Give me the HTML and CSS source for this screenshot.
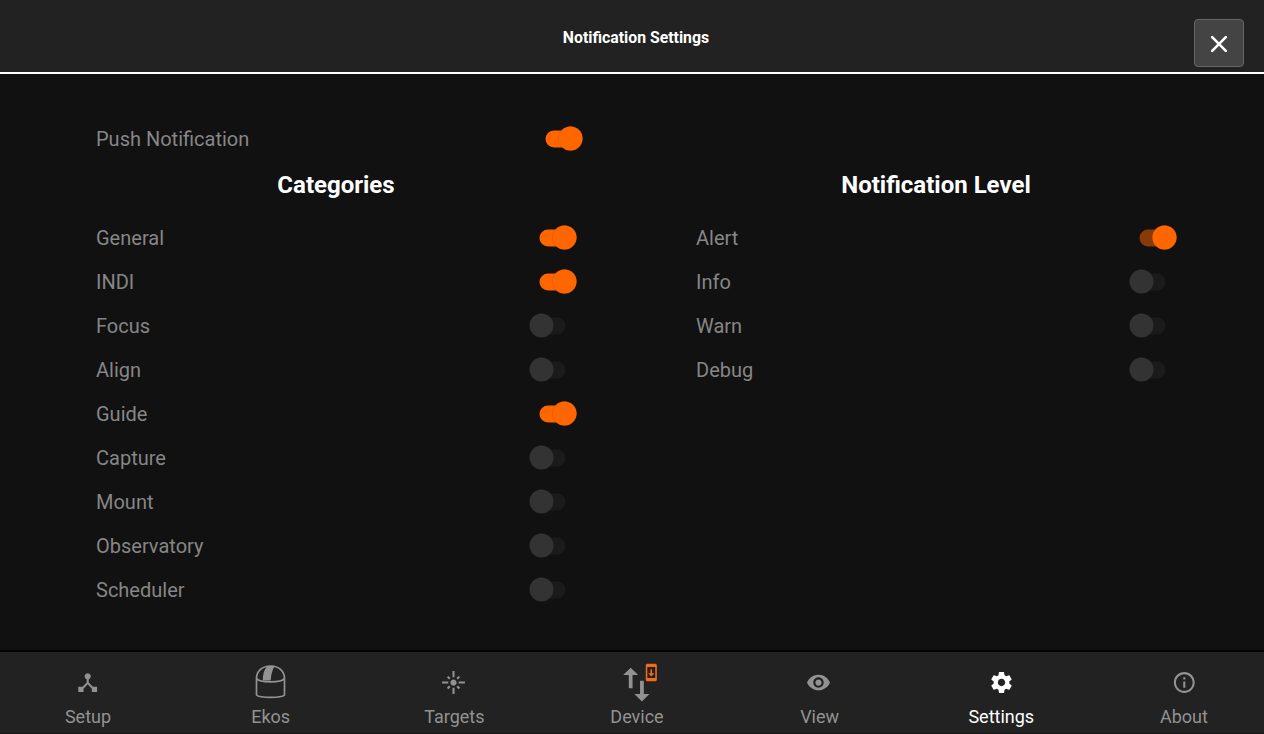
FILE: index.html
```html
<!DOCTYPE html>
<html lang="en">
<head>
<meta charset="utf-8">
<title>Notification Settings</title>
<link rel="stylesheet" href="styles.css">
</head>
<body>
<div class="app">
  <header class="header">
    <span class="spacer"></span>
    <h1 class="title">Notification Settings</h1>
    <div class="actions">
      <button class="close" aria-label="Close"><svg width="18" height="18" viewBox="0 0 18 18"><path d="M2.200 2.200l13.600 13.600M15.800 2.200L2.200 15.800" fill="none" stroke="#fff" stroke-width="2.600" stroke-linecap="round"/></svg></button>
    </div>
  </header>
  <main class="content">
    <div class="row push"><span>Push Notification</span><i class="switch on"></i></div>
    <div class="columns">
      <section class="column">
        <h2 class="heading">Categories</h2>
        <div class="row"><span>General</span><i class="switch on"></i></div>
        <div class="row"><span>INDI</span><i class="switch on"></i></div>
        <div class="row"><span>Focus</span><i class="switch"></i></div>
        <div class="row"><span>Align</span><i class="switch"></i></div>
        <div class="row"><span>Guide</span><i class="switch on"></i></div>
        <div class="row"><span>Capture</span><i class="switch"></i></div>
        <div class="row"><span>Mount</span><i class="switch"></i></div>
        <div class="row"><span>Observatory</span><i class="switch"></i></div>
        <div class="row"><span>Scheduler</span><i class="switch"></i></div>
      </section>
      <section class="column">
        <h2 class="heading">Notification Level</h2>
        <div class="row"><span>Alert</span><i class="switch on dim"></i></div>
        <div class="row"><span>Info</span><i class="switch"></i></div>
        <div class="row"><span>Warn</span><i class="switch"></i></div>
        <div class="row"><span>Debug</span><i class="switch"></i></div>
      </section>
    </div>
  </main>
  <nav class="tabs">
    <a class="tab"><span class="icon setup"><svg width="25" height="25" viewBox="0 0 24 24"><path d="M17 16l-4-4V8.820C14.160 8.400 15 7.300 15 6c0-1.660-1.340-3-3-3S9 4.340 9 6c0 1.300.84 2.400 2 2.820V12l-4 4H3v5h5v-3.050l4-4.200 4 4.200V21h5v-5h-4z"/></svg></span><span class="label">Setup</span></a>
    <a class="tab"><span class="icon ekos"><svg width="32" height="36" viewBox="0 0 32 36"><g fill="none" stroke="currentColor" stroke-width="1.700"><path d="M2 14.500C2 7 8 2 16 2s14 5 14 12.500V31c-3 3.200-25 3.200-28 0z"/><path d="M2 14.500c3 4.500 25 4.500 28 0"/></g><path d="M12.500 2.500l4.500-.8h3.500c-2.500 3.500-3.800 8-4.300 14.800H8.300C8.300 10.500 9.500 6 12.500 2.500z"/></svg></span><span class="label">Ekos</span></a>
    <a class="tab"><span class="icon"><svg width="25" height="25" viewBox="0 0 24 24"><path d="M7 11H1v2h6v-2zm2.170-3.240L7.050 5.640 5.640 7.050l2.120 2.120 1.410-1.410zM13 1h-2v6h2V1zm5.360 6.050l-1.410-1.410-2.120 2.120 1.410 1.410 2.120-2.120zM17 11v2h6v-2h-6zm-5-2c-1.660 0-3 1.340-3 3s1.340 3 3 3 3-1.340 3-3-1.340-3-3-3zm2.830 7.240l2.120 2.120 1.410-1.410-2.120-2.120-1.410 1.410zm-9.190.710l1.410 1.410 2.120-2.120-1.410-1.410-2.120 2.120zM11 23h2v-6h-2v6z"/></svg></span><span class="label nudge">Targets</span></a>
    <a class="tab"><span class="icon device"><svg class="arrows" width="45" height="45" viewBox="0 0 24 24"><path d="M9 3L5 6.990h3V14h2V6.990h3L9 3zm7 14.010V10h-2v7.010h-3L15 21l4-3.990h-3z"/></svg><svg class="badge" width="19" height="19" viewBox="0 0 24 24"><path d="M17 1.010L7 1c-1.100 0-2 .9-2 2v18c0 1.100.9 2 2 2h10c1.100 0 2-.9 2-2V3c0-1.100-.9-1.990-2-1.990zM17 19H7V5h10v14zm-1-6h-3V8h-2v5H8l4 4 4-4z"/></svg></span><span class="label nudge">Device</span></a>
    <a class="tab"><span class="icon"><svg width="25" height="25" viewBox="0 0 24 24"><path d="M12 4.500C7 4.500 2.730 7.610 1 12c1.730 4.390 6 7.500 11 7.500s9.270-3.110 11-7.500c-1.730-4.390-6-7.500-11-7.500zM12 17c-2.760 0-5-2.240-5-5s2.240-5 5-5 5 2.240 5 5-2.240 5-5 5zm0-8c-1.660 0-3 1.340-3 3s1.340 3 3 3 3-1.340 3-3-1.340-3-3-3z"/></svg></span><span class="label nudge">View</span></a>
    <a class="tab active"><span class="icon"><svg width="25" height="25" viewBox="0 0 24 24"><path d="M19.430 12.980c.04-.32.07-.64.07-.98s-.03-.66-.07-.98l2.110-1.650c.19-.15.24-.42.12-.64l-2-3.460c-.12-.22-.39-.3-.61-.22l-2.490 1c-.52-.4-1.080-.73-1.690-.98l-.38-2.650C14.460 2.180 14.250 2 14 2h-4c-.25 0-.46.18-.49.42l-.38 2.650c-.61.25-1.170.59-1.690.98l-2.490-1c-.23-.09-.49 0-.61.22l-2 3.460c-.13.22-.07.49.12.64l2.110 1.650c-.04.32-.07.65-.07.98s.03.66.07.98l-2.110 1.650c-.19.15-.24.42-.12.64l2 3.460c.12.22.39.3.61.22l2.490-1c.52.4 1.080.73 1.690.98l.38 2.650c.03.24.24.42.49.42h4c.25 0 .46-.18.49-.42l.38-2.650c.61-.25 1.170-.59 1.690-.98l2.490 1c.23.09.49 0 .61-.22l2-3.460c.12-.22.07-.49-.12-.64l-2.110-1.650zM12 15.500c-1.930 0-3.500-1.570-3.500-3.500s1.570-3.500 3.500-3.500 3.500 1.570 3.500 3.500-1.570 3.500-3.500 3.500z"/></svg></span><span class="label">Settings</span></a>
    <a class="tab"><span class="icon about"><svg width="25" height="25" viewBox="0 0 24 24"><path d="M11 17h2v-6h-2v6zm1-15C6.480 2 2 6.480 2 12s4.480 10 10 10 10-4.480 10-10S17.520 2 12 2zm0 18c-4.410 0-8-3.590-8-8s3.590-8 8-8 8 3.590 8 8-3.590 8-8 8zM11 9h2V7h-2v2z"/></svg></span><span class="label">About</span></a>
  </nav>
</div>
</body>
</html>
```
FILE: styles.css
```css
* { box-sizing: border-box; }
body { margin: 0; background: #111; font-family: Roboto, sans-serif; }
.app { display: flex; flex-direction: column; height: 734px; overflow: hidden; }

.header { display: grid; grid-template-columns: 1fr auto 1fr; height: 74px; background: #222; border-bottom: 2px solid #fff; }
.title { margin: 0; padding-left: 8px; font-size: 15.800px; line-height: 75px; font-weight: 700; color: #fff; white-space: nowrap; }
.actions { display: flex; justify-content: flex-end; padding: 19px 20px 0 0; }
.close { display: flex; align-items: center; justify-content: center; width: 50px; height: 48px; padding: 2px 0 0; background: #444; border: 1px solid #666; border-radius: 4px; }

.content { flex: 1; padding: 43px 88px 0 96px; }
.row { display: flex; align-items: center; justify-content: space-between; height: 44px; font-size: 20px; color: #868686; }
.push { width: 486px; }
.columns { display: flex; gap: 120px; }
.column { width: 480px; }
.heading { margin: 0; height: 55px; line-height: 48px; font-size: 24px; font-weight: 700; text-align: center; color: #fff; }

.switch { display: flex; align-items: center; width: 37px; height: 24px; margin-right: 10px; position: relative; transform: translate(.5px, -.5px); }
.switch::before { content: ""; width: 26px; height: 17px; margin-left: 10px; border-radius: 9px; background: #1b1b1b; }
.switch::after { content: ""; position: absolute; left: 0; top: 0; width: 24px; height: 24px; border-radius: 50%; background: #333; }
.switch.on { margin-right: -1px; transform: translate(-.5px, -.5px); }
.switch.on::before { margin-left: 0; background: #ff6600; }
.switch.on::after { left: 13px; background: #ff6600; box-shadow: 0 0 1px #b94b00; }
.switch.dim::before { background: #883b08; }

.tabs { display: flex; justify-content: space-between; height: 84px; padding: 0 30px 0 38px; background: #222; border-top: 2px solid #050505; border-bottom: 1px solid #151515; }
.tab { display: flex; flex-direction: column; align-items: center; width: 100px; color: #929292; }
.tab svg { display: block; fill: currentColor; }
.tab.active { color: #fff; }
.icon { display: flex; align-items: center; justify-content: center; position: relative; width: 100px; height: 46px; padding-top: 15px; margin-bottom: 8px; }
.setup { transform: translateX(-.8px); }
.ekos { transform: translate(-.5px, -1px); }
.device { transform: translateX(.8px); }
.about { transform: translateX(.8px); }
.label { font-size: 18px; line-height: 22px; }
.nudge { padding-left: 2px; }
.arrows { flex: none; margin-top: 4px; }
.badge { position: absolute; left: 55.500px; top: 11px; color: #f26a1b; }
```
